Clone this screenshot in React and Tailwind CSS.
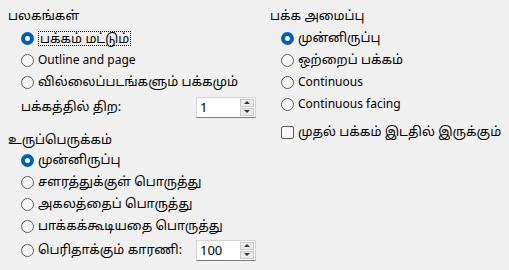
import React from 'react'

const font = { fontFamily: '"Noto Sans", "Noto Sans Tamil", sans-serif' }

function Radio({ checked }) {
  if (checked) {
    return (
      <span className="w-[13px] h-[13px] rounded-full bg-[#005fb8] flex items-center justify-center shrink-0">
        <span className="w-[5px] h-[5px] rounded-full bg-white" />
      </span>
    )
  }
  return <span className="w-[13px] h-[13px] rounded-full border border-[#5c5c5c] bg-[#f7f7f7] shrink-0" />
}

// latin labels are drawn a bit smaller than the tamil ones
function RadioRow({ label, checked, focus, latin }) {
  return (
    <div className="h-[22px] flex items-center gap-[4px]">
      <Radio checked={checked} />
      <span className={`${latin ? 'text-[12px]' : ''} ${focus ? 'border border-dotted border-black px-[1px] leading-[13px]' : ''}`}>{label}</span>
    </div>
  )
}

function Spin({ value }) {
  return (
    <div className="w-[60px] h-[21px] flex bg-white border border-[#d5d5d5] border-b-[#7a7a7a]">
      <span className="flex-1 pl-[3px] leading-[19px] text-[13px]">{value}</span>
      <div className="w-[15px] flex flex-col gap-[1px] py-[1px] pr-[1px]">
        <span className="flex-1 bg-[#ececec] border border-[#c8c8c8] flex items-center justify-center">
          <span className="w-0 h-0 border-l-[3px] border-r-[3px] border-b-[3px] border-l-transparent border-r-transparent border-b-[#333]" />
        </span>
        <span className="flex-1 bg-[#ececec] border border-[#c8c8c8] flex items-center justify-center">
          <span className="w-0 h-0 border-l-[3px] border-r-[3px] border-t-[3px] border-l-transparent border-r-transparent border-t-[#333]" />
        </span>
      </div>
    </div>
  )
}

export default function App() {
  return (
    <div className="w-[509px] h-[270px] bg-[#f0f0f0] flex text-[12.8px] text-black overflow-hidden" style={font}>
      <div className="w-[260px] pl-[8px] pt-[6px]">
        <div className="h-[20px] flex items-center">பலகங்கள்</div>
        <div className="pl-[13px] mt-[1px]">
          <RadioRow label="பக்கம் மட்டும்" checked focus />
          <RadioRow label="Outline and page" latin />
          <RadioRow label="வில்லைப்படங்களும் பக்கமும்" />
          <div className="h-[22px] mt-[3px] flex items-center justify-between pr-[4px]">
            <span>பக்கத்தில் திற:</span>
            <Spin value="1" />
          </div>
        </div>
        <div className="h-[20px] mt-[12px] flex items-center">உருப்பெருக்கம்</div>
        <div className="pl-[13px] -mt-[1px]">
          <RadioRow label="முன்னிருப்பு" checked />
          <RadioRow label="சளரத்துக்குள் பொருத்து" />
          <RadioRow label="அகலத்தைப் பொருத்து" />
          <RadioRow label="பாக்கக்கூடியதை பொருத்து" />
          <div className="h-[22px] mt-[2px] flex items-center justify-between pr-[4px]">
            <div className="flex items-center gap-[4px]">
              <Radio />
              <span>பெரிதாக்கும் காரணி:</span>
            </div>
            <Spin value="100" />
          </div>
        </div>
      </div>
      <div className="flex-1 pl-[10px] pt-[6px]">
        <div className="h-[20px] flex items-center">பக்க அமைப்பு</div>
        <div className="pl-[11px] mt-[1px]">
          <RadioRow label="முன்னிருப்பு" checked />
          <RadioRow label="ஒற்றைப் பக்கம்" />
          <RadioRow label="Continuous" latin />
          <RadioRow label="Continuous facing" latin />
          <div className="h-[22px] mt-[6px] flex items-center gap-[4px]">
            <span className="w-[13px] h-[13px] rounded-[2px] border border-[#5c5c5c] bg-[#f7f7f7] shrink-0" />
            <span>முதல் பக்கம் இடதில் இருக்கும்</span>
          </div>
        </div>
      </div>
    </div>
  )
}
